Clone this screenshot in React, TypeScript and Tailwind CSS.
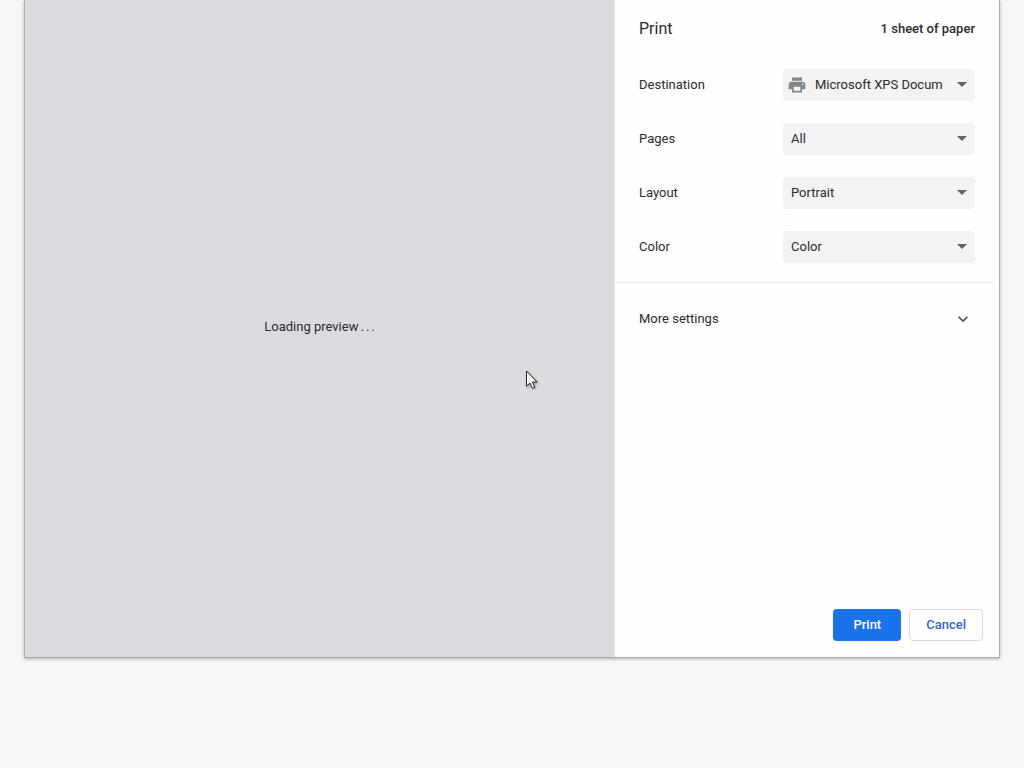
import type { ReactNode } from 'react';

interface SettingSelectProps {
  id: string;
  label: string;
  options: string[];
  icon?: ReactNode;
}

function PrinterIcon() {
  return (
    <svg viewBox="0 0 24 24" className="h-5 w-5 fill-[#80868b]" aria-hidden="true">
      <path d="M19 8H5c-1.66 0-3 1.34-3 3v6h4v4h12v-4h4v-6c0-1.66-1.34-3-3-3zm-3 11H8v-5h8v5zm3-7c-.55 0-1-.45-1-1s.45-1 1-1 1 .45 1 1-.45 1-1 1zm-1-9H6v4h12V3z" />
    </svg>
  );
}

function SettingSelect({ id, label, options, icon }: SettingSelectProps) {
  return (
    <div className="flex h-[54px] items-center">
      <label htmlFor={id} className="w-36 shrink-0">
        {label}
      </label>
      <div className="relative min-w-0 flex-1">
        {icon && <span className="pointer-events-none absolute top-1.5 left-1">{icon}</span>}
        <select
          id={id}
          className={`block h-8 w-full appearance-none overflow-hidden rounded bg-[#f2f3f4] pr-8 ${icon ? 'pl-8' : 'pl-2'}`}
        >
          {options.map((option) => (
            <option key={option}>{option}</option>
          ))}
        </select>
        <svg
          viewBox="0 0 10 5"
          className="pointer-events-none absolute top-[13px] right-2 h-[5px] w-2.5 fill-[#5f6368]"
          aria-hidden="true"
        >
          <path d="M0 0h10L5 5z" />
        </svg>
      </div>
    </div>
  );
}

function Cursor() {
  return (
    <svg
      viewBox="0 0 12 19"
      className="pointer-events-none absolute top-[370px] left-[501px] h-[19px] w-3 drop-shadow-[1px_1px_1px_rgba(0,0,0,0.35)]"
      aria-hidden="true"
    >
      <path
        d="M.5 1v15.2l3.5-3.3 2.3 5.3 2.4-1-2.3-5.2h4.7z"
        fill="#fff"
        stroke="#222"
        strokeWidth="1"
      />
    </svg>
  );
}

export default function App() {
  return (
    <div className="flex min-h-screen flex-col bg-[#f7f7f7] px-6 pb-[110px] font-['Roboto',sans-serif] text-[13px] leading-5 text-[#2b2c30]">
      <div
        role="dialog"
        aria-labelledby="print-title"
        className="relative flex flex-1 border border-t-0 border-[#acacae] bg-white shadow-[0_1px_3px_rgba(0,0,0,0.3)]"
      >
        <main className="flex flex-1 items-center justify-center bg-[#dadbdf] pb-1">
          <p className="flex">
            Loading preview
            <span className="ml-0.5">.</span>
            <span className="ml-0.5">.</span>
            <span className="ml-0.5">.</span>
          </p>
        </main>

        <aside className="flex w-[385px] shrink-0 flex-col border-l border-[#e8e8eb] bg-[#fefefe]">
          <header className="flex h-[58px] items-center justify-between px-6">
            <h1 id="print-title" className="text-base">
              Print
            </h1>
            <span className="font-medium">1 sheet of paper</span>
          </header>

          <div className="mr-1.5 border-b border-[#e3e4e6] pr-[18px] pb-2 pl-6">
            <SettingSelect
              id="destination"
              label="Destination"
              options={['Microsoft XPS Document Writer', 'Save as PDF']}
              icon={<PrinterIcon />}
            />
            <SettingSelect id="pages" label="Pages" options={['All', 'Custom']} />
            <SettingSelect id="layout" label="Layout" options={['Portrait', 'Landscape']} />
            <SettingSelect id="color" label="Color" options={['Color', 'Black and white']} />
          </div>

          <button type="button" aria-expanded="false" className="flex h-[72px] items-center justify-between px-6">
            More settings
            <svg
              viewBox="0 0 24 24"
              className="mr-0.5 h-5 w-5 fill-[#4a4d51]"
              aria-hidden="true"
            >
              <path d="M16.59 8.59 12 13.17 7.41 8.59 6 10l6 6 6-6z" />
            </svg>
          </button>

          <footer className="mt-auto flex justify-end gap-2 p-4 font-medium">
            <button type="button" className="h-8 rounded bg-[#1a73e8] px-5 text-white">
              Print
            </button>
            <button type="button" className="h-8 rounded border border-[#dadce0] px-4 text-[#3367c6]">
              Cancel
            </button>
          </footer>
        </aside>

        <Cursor />
      </div>
    </div>
  );
}
